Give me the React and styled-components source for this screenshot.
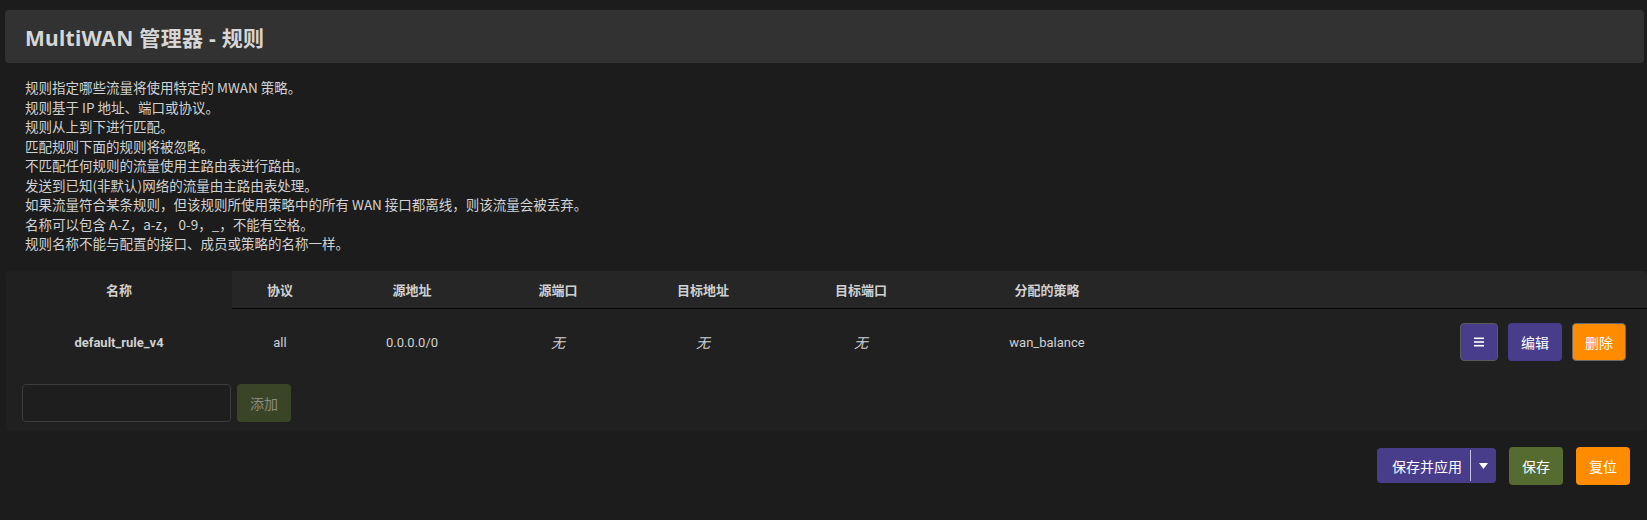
import React from "react";
import styled, { createGlobalStyle } from "styled-components";

const Global = createGlobalStyle`
  html, body { margin: 0; padding: 0; background: #1c1c1c; }
  body { font-family: Roboto, "Noto Sans CJK SC", sans-serif; color: #cfcfcf; }
  * { box-sizing: border-box; }
`;

const Page = styled.div`
  padding: 10px 3px 34px 5px;
  min-height: 520px;
`;

const TitleBar = styled.div`
  height: 53px;
  background: #323232;
  border-radius: 4px;
  display: flex;
  align-items: center;
  padding-left: 20px;
`;

const Title = styled.h2`
  margin: 0;
  font-size: 21px;
  font-weight: 700;
  color: #d6d6d6;
  font-family: "Noto Sans", "Noto Sans CJK SC", sans-serif;
  letter-spacing: 0.3px;
`;

const Desc = styled.div`
  padding: 15px 0 0 20px;
  font-size: 13.5px;
  line-height: 19.5px;
  color: #d2d2d2;
  font-family: "Noto Sans CJK SC", sans-serif;
`;

const Line = styled.div``;

const TableBox = styled.div`
  margin: 17px -3px 0 1px;
  background: #202020;
  border-radius: 4px;
  padding-bottom: 9px;
`;

const cols = "226px 96px 168px 124px 166px 150px 222px 1fr";

const HeadRow = styled.div`
  display: grid;
  grid-template-columns: ${cols};
  height: 38px;
`;

const HeadCell = styled.div`
  display: flex;
  align-items: center;
  justify-content: center;
  font-weight: 700;
  font-size: 13px;
  color: #d0d0d0;
  background: ${(p) => (p.$plain ? "transparent" : "#262626")};
  border-bottom: ${(p) => (p.$plain ? "1px solid transparent" : "1px solid #050505")};
  border-top-right-radius: ${(p) => (p.$last ? "4px" : "0")};
  font-family: "Noto Sans CJK SC", sans-serif;
`;

const DataRow = styled.div`
  display: grid;
  grid-template-columns: ${cols};
  height: 67px;
`;

const Cell = styled.div`
  display: flex;
  align-items: center;
  justify-content: ${(p) => (p.$end ? "flex-end" : "center")};
  font-size: ${(p) => (p.$italic ? "14px" : "13px")};
  color: #d0d0d0;
  font-weight: ${(p) => (p.$bold ? 700 : 400)};
  font-style: ${(p) => (p.$italic ? "italic" : "normal")};
  padding-right: ${(p) => (p.$end ? "21px" : "0")};
  gap: 10px;
`;

const Btn = styled.button`
  height: 38px;
  min-width: ${(p) => p.$w || 54}px;
  padding: 0 12px;
  border-radius: 4px;
  border: 1px solid ${(p) => p.$border || "transparent"};
  background: ${(p) => p.$bg};
  color: ${(p) => p.$color || "#fff"};
  font-size: 14px;
  font-family: "Noto Sans CJK SC", sans-serif;
  display: inline-flex;
  align-items: center;
  justify-content: center;
  cursor: pointer;
`;

const AddRow = styled.div`
  display: flex;
  gap: 6px;
  padding: 8px 0 0 16px;
`;

const Input = styled.input`
  width: 209px;
  height: 38px;
  border-radius: 4px;
  border: 1px solid #3c3c3c;
  background: #1e1e1e;
  color: #ccc;
  padding: 0 8px;
  outline: none;
`;

const Footer = styled.div`
  display: flex;
  justify-content: flex-end;
  align-items: center;
  gap: 13px;
  padding: 16px 14px 0 0;
`;

const Split = styled.div`
  display: flex;
  align-items: stretch;
  height: 35px;
  background: #483d8b;
  border-radius: 4px;
  overflow: hidden;
`;

const SplitMain = styled.span`
  display: flex;
  align-items: center;
  padding: 0 8px 0 15px;
  color: #fff;
  font-size: 14px;
  font-family: "Noto Sans CJK SC", sans-serif;
`;

const Divider = styled.span`
  width: 1px;
  margin: 2px 0;
  background: #c8c4de;
`;

const Caret = styled.span`
  display: flex;
  align-items: center;
  justify-content: center;
  width: 25px;
`;

const MenuIcon = () => (
  <svg width="10" height="10" viewBox="0 0 10 10">
    <rect x="0" y="0.5" width="10" height="1.6" fill="#fff" />
    <rect x="0" y="4.2" width="10" height="1.6" fill="#fff" />
    <rect x="0" y="7.9" width="10" height="1.6" fill="#fff" />
  </svg>
);

const lines = [
  "规则指定哪些流量将使用特定的 MWAN 策略。",
  "规则基于 IP 地址、端口或协议。",
  "规则从上到下进行匹配。",
  "匹配规则下面的规则将被忽略。",
  "不匹配任何规则的流量使用主路由表进行路由。",
  "发送到已知(非默认)网络的流量由主路由表处理。",
  "如果流量符合某条规则，但该规则所使用策略中的所有 WAN 接口都离线，则该流量会被丢弃。",
  "名称可以包含 A-Z，a-z， 0-9，_，不能有空格。",
  "规则名称不能与配置的接口、成员或策略的名称一样。",
];

const heads = ["名称", "协议", "源地址", "源端口", "目标地址", "目标端口", "分配的策略", ""];

export default function App() {
  return (
    <Page>
      <Global />
      <TitleBar>
        <Title>MultiWAN 管理器 - 规则</Title>
      </TitleBar>
      <Desc>
        {lines.map((l, i) => (
          <Line key={i}>{l}</Line>
        ))}
      </Desc>
      <TableBox>
        <HeadRow>
          {heads.map((h, i) => (
            <HeadCell key={i} $plain={i === 0} $last={i === heads.length - 1}>
              {h}
            </HeadCell>
          ))}
        </HeadRow>
        <DataRow>
          <Cell $bold>default_rule_v4</Cell>
          <Cell>all</Cell>
          <Cell>0.0.0.0/0</Cell>
          <Cell $italic>无</Cell>
          <Cell $italic>无</Cell>
          <Cell $italic>无</Cell>
          <Cell>wan_balance</Cell>
          <Cell $end>
            <Btn $bg="#483d8b" $border="#5a5a5a" $w={38}>
              <MenuIcon />
            </Btn>
            <Btn $bg="#483d8b">编辑</Btn>
            <Btn $bg="#ff8c00" $border="#6a6a6a">删除</Btn>
          </Cell>
        </DataRow>
        <AddRow>
          <Input />
          <Btn $bg="#3a4527" $color="#8a8a80">添加</Btn>
        </AddRow>
      </TableBox>
      <Footer>
        <Split>
          <SplitMain>保存并应用</SplitMain>
          <Divider />
          <Caret>
            <svg width="9" height="6" viewBox="0 0 9 6">
              <path d="M0 0 L9 0 L4.5 6 Z" fill="#fff" />
            </svg>
          </Caret>
        </Split>
        <Btn $bg="#556b2f">保存</Btn>
        <Btn $bg="#ff8c00">复位</Btn>
      </Footer>
    </Page>
  );
}
